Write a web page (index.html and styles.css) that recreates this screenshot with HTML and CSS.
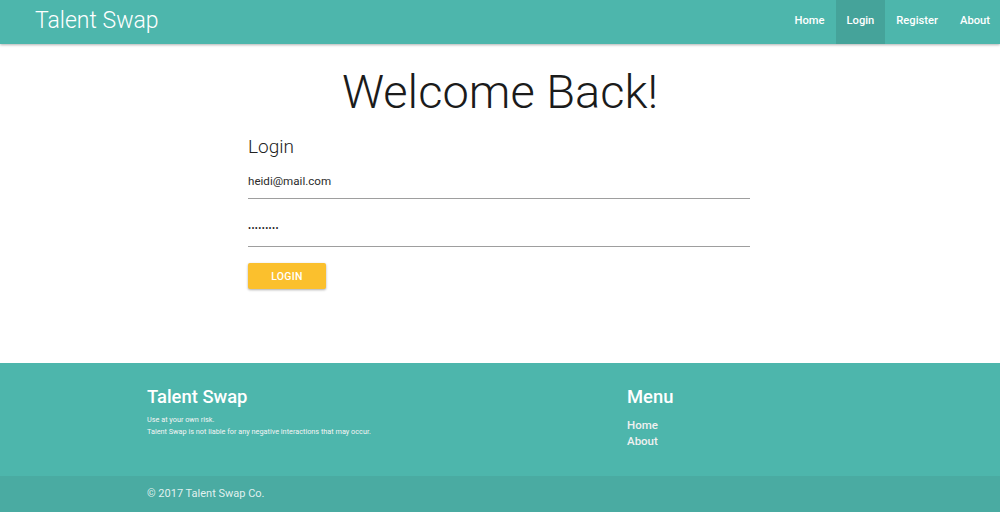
FILE: index.html
```html
<!DOCTYPE html>
<html lang="en">
<head>
<meta charset="utf-8">
<title>Talent Swap</title>
<link rel="stylesheet" href="styles.css">
</head>
<body>
<nav class="navbar">
  <a class="brand" href="#">Talent Swap</a>
  <ul class="nav-links">
    <li><a href="#">Home</a></li>
    <li class="active"><a href="#">Login</a></li>
    <li><a href="#">Register</a></li>
    <li><a href="#">About</a></li>
  </ul>
</nav>
<main class="main">
  <h1 class="title">Welcome Back!</h1>
  <form class="login-form">
    <h4 class="form-title">Login</h4>
    <div class="field"><span class="value">heidi@mail.com</span></div>
    <div class="field field-pass"><span class="value dots">•••••••••</span></div>
    <button type="button" class="btn">LOGIN</button>
  </form>
</main>
<footer class="footer">
  <div class="footer-inner">
    <div class="footer-about">
      <h5 class="footer-title">Talent Swap</h5>
      <p class="footer-text">Use at your own risk.<br>Talent Swap is not liable for any negative interactions that may occur.</p>
    </div>
    <div class="footer-menu">
      <h5 class="footer-title">Menu</h5>
      <ul class="footer-links">
        <li><a href="#">Home</a></li>
        <li><a href="#">About</a></li>
      </ul>
    </div>
  </div>
  <div class="copyright">
    <div class="copyright-inner">© 2017 Talent Swap Co.</div>
  </div>
</footer>
</body>
</html>
```

FILE: styles.css
```css
* { box-sizing: border-box; }
html, body {
  margin: 0;
  padding: 0;
  background: #fff;
  font-family: Roboto, "Liberation Sans", sans-serif;
}
a { text-decoration: none; color: inherit; }
ul { list-style: none; margin: 0; padding: 0; }

.navbar {
  height: 44px;
  background: #4db6ac;
  display: flex;
  justify-content: space-between;
  align-items: stretch;
  padding: 0 0 0 35px;
  box-shadow: 0 1px 3px rgba(0,0,0,0.18), 0 1px 2px rgba(0,0,0,0.14);
  position: relative;
  z-index: 1;
}
.brand {
  color: #fff;
  font-size: 23px;
  font-weight: 300;
  line-height: 42px;
}
.nav-links { display: flex; }
.nav-links li a {
  display: block;
  height: 44px;
  line-height: 42px;
  padding: 0 11px;
  color: #fff;
  font-size: 11.2px;
  font-weight: 500;
}
.nav-links li:first-child a { padding-left: 12px; }
.nav-links li:last-child a { padding-right: 10px; }
.nav-links li.active a { background: rgba(0,0,0,0.1); }

.main {
  height: 319px;
  padding-top: 20px;
}
.title {
  margin: 0;
  text-align: center;
  font-size: 47px;
  font-weight: 300;
  line-height: 56px;
  color: #1b1b1b;
}
.login-form {
  width: 502px;
  margin: 0 auto;
  position: relative;
  left: -1px;
}
.form-title {
  margin: 14px 0 0;
  font-size: 19px;
  font-weight: 300;
  line-height: 26px;
  color: #222;
}
.field {
  height: 35px;
  border-bottom: 1px solid #9e9e9e;
  margin-top: 4px;
  display: flex;
  align-items: flex-start;
  padding-top: 9px;
}
.field + .field { margin-top: 13px; }
.value {
  font-size: 11.6px;
  line-height: 16px;
  color: #2b2b2b;
}
.dots {
  font-size: 9px;
  letter-spacing: 0.4px;
  color: #222;
  margin-top: -1px;
}
.btn {
  display: block;
  margin-top: 16px;
  width: 78px;
  height: 26px;
  border: none;
  border-radius: 2px;
  background: #fbc02d;
  color: #fff;
  font-family: Roboto, "Liberation Sans", sans-serif;
  font-size: 10.5px;
  font-weight: 500;
  letter-spacing: 0.3px;
  box-shadow: 0 1px 3px rgba(0,0,0,0.2), 0 1px 2px rgba(0,0,0,0.14);
  padding: 0;
}

.footer {
  background: #4db6ac;
  color: #fff;
  margin-bottom: 1px;
}
.footer-inner {
  width: 706px;
  margin: 0 auto;
  display: grid;
  grid-template-columns: 480px 1fr;
  height: 113px;
  padding-top: 22px;
}
.footer-title {
  margin: 0;
  font-size: 18.4px;
  font-weight: 500;
  line-height: 24px;
}
.footer-text {
  margin: 5px 0 0;
  font-size: 7.3px;
  line-height: 12px;
  color: #f4f4f4;
}
.footer-links { margin-top: 8px; }
.footer-links li a {
  display: block;
  font-size: 11.5px;
  font-weight: 500;
  line-height: 16px;
  color: #f0f0f0;
}
.copyright {
  background: rgba(51,51,51,0.08);
  height: 36px;
}
.copyright-inner {
  width: 706px;
  margin: 0 auto;
  line-height: 36px;
  font-size: 11px;
  color: rgba(255,255,255,0.85);
}
```
